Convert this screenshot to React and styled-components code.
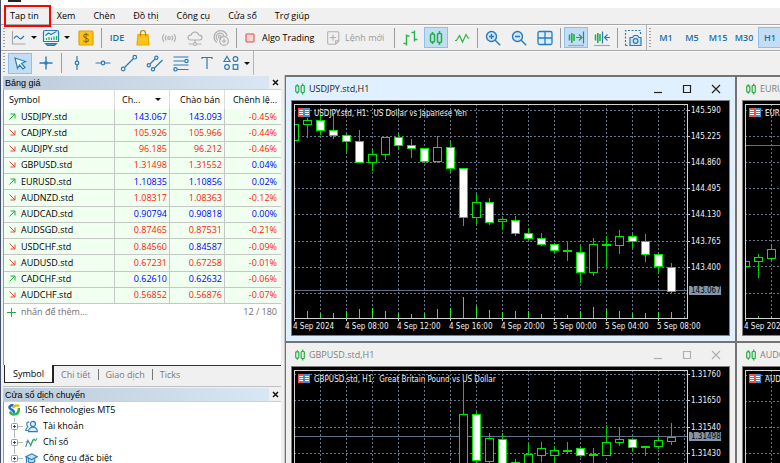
import React, { useState } from 'react';
import styled, { createGlobalStyle, css } from 'styled-components';

const GlobalStyle = createGlobalStyle`
  * {
    box-sizing: border-box;
  }
  body {
    margin: 0;
    background: #f0f0f0;
    color: #000;
    font-family: 'Open Sans', 'Noto Sans', sans-serif;
    font-size: 9px;
    line-height: 16px;
  }
  button {
    font: inherit;
    color: inherit;
    border: 0;
    padding: 0;
    background: none;
  }
`;

const Page = styled.div`
  display: flex;
  flex-direction: column;
  height: 100vh;
  overflow: hidden;
  border-left: 1px solid #43506a;
`;

const TitleBar = styled.header`
  flex: none;
  height: 8px;
  padding-left: 7px;
  background: #fff;
`;

const AppMark = styled.div`
  width: 13px;
  height: 2px;
  background: #222;
`;

const MenuBar = styled.nav`
  display: flex;
  flex: none;
  height: 16px;
`;

const MenuItem = styled.button`
  position: relative;
  padding: 0 9px;
  white-space: nowrap;

  ${props => props.$marked && css`
    &::after {
      content: '';
      position: absolute;
      inset: -3px -3px -3px 3px;
      border: 2px solid #f00;
      z-index: 2;
    }
  `}
`;

const Toolbar = styled.div`
  display: flex;
  flex: none;
  align-items: center;
  height: ${props => props.$height}px;
  padding-left: 2px;
  border-top: 1px solid #a8a8a8;
  box-shadow: inset 0 1px #fafafa;
`;

const Grip = styled.span`
  flex: none;
  width: 2px;
  height: 20px;
  margin-right: 2px;
  background: repeating-linear-gradient(#a0a0a0 0 1px, transparent 1px 3px);
`;

const Separator = styled.span`
  flex: none;
  width: 1px;
  height: 20px;
  margin: 0 2px;
  background: #9c9c9c;
`;

const GroupEdge = styled.span`
  flex: none;
  width: 1px;
  height: 100%;
  margin-right: 2px;
  background: #b4b4b4;
`;

const ToolButton = styled.button`
  display: flex;
  flex: none;
  align-items: center;
  justify-content: center;
  width: 24px;
  height: 21px;
  margin: 0 1px;
  border: 1px solid ${props => (props.$active ? '#8fc0ea' : 'transparent')};
  background: ${props => (props.$active ? '#c3ddf5' : 'none')};
  color: #1c6ea8;
`;

const TextButton = styled(ToolButton)`
  font-weight: 600;
`;

const DropButton = styled.button`
  display: flex;
  flex: none;
  align-items: center;
  gap: 4px;
  width: 33px;
  padding-left: 2px;
`;

const LabelButton = styled.button`
  display: flex;
  flex: none;
  align-items: center;
  gap: 4px;
  width: ${props => props.$width}px;
  padding-left: 3px;
  white-space: nowrap;
  color: ${props => (props.disabled ? '#9a9a9a' : '#000')};
`;

const Caret = styled.span`
  flex: none;
  border: 3px solid transparent;
  border-top-color: #111;
  border-bottom: 0;
`;

const Main = styled.main`
  display: flex;
  flex: 1;
  min-height: 0;
`;

const Sidebar = styled.aside`
  display: flex;
  flex-direction: column;
  flex: none;
  width: 284px;
  padding: 1px 3px 0 2px;
  border-right: 1px solid #c8c8c8;
`;

const PanelTitle = styled.h2`
  display: flex;
  flex: none;
  align-items: center;
  justify-content: space-between;
  height: 13px;
  margin: 0;
  padding-left: 2px;
  background: linear-gradient(90deg, #bccbda, #d9e6f3 266px, #f0f0f0 266px);
  font-family: 'Liberation Sans', sans-serif;
  font-size: 9px;
  font-weight: 400;
  line-height: 12px;
`;

const PanelClose = styled.button`
  display: flex;
  padding: 0 2px;
`;

const PanelBody = styled.div`
  flex: ${props => (props.$fill ? '1' : 'none')};
  height: ${props => (props.$fill ? 'auto' : '276px')};
  background: #fff;
  border-left: 1px solid #9a9a9a;
  border-top: 1px solid #d0d0d0;
`;

const Quotes = styled.table`
  width: 100%;
  height: 214px;
  border-collapse: separate;
  border-spacing: 0;
  table-layout: fixed;
`;

const HeadCell = styled.th`
  height: 19px;
  padding: 0 4px 0 ${props => (props.$first ? 5 : 7)}px;
  border-right: 1px solid #ddd;
  font-weight: 400;
  line-height: 18px;
  text-align: ${props => props.$align || 'left'};
  white-space: nowrap;

  &:last-child {
    border-right: 0;
  }
`;

const SortMark = styled(Caret)`
  display: inline-block;
  margin: 0 0 2px 15px;
`;

const Cell = styled.td`
  padding: 0 2px 0 0;
  background: #f0fff0;
  border-right: 1px solid #c4c8c4;
  border-bottom: 1px solid #c4c8c4;
  color: ${props => (props.$up ? '#00f' : '#ff1a0a')};
  line-height: 14px;
  text-align: right;

  &:last-child {
    padding-right: 4px;
    border-right: 0;
  }
`;

const NameCell = styled(Cell)`
  padding-left: 5px;
  color: #000;
  text-align: left;

  svg {
    margin-right: 5px;
  }
`;

const AddRow = styled.div`
  display: flex;
  align-items: center;
  padding: 0 4px 0 3px;
  gap: 5px;
  color: #707070;
`;

const Count = styled.span`
  margin-left: auto;
`;

const Tabs = styled.div`
  display: flex;
  flex: none;
  height: 22px;
  margin-bottom: 1px;
  padding-left: 1px;
  border-bottom: 1px solid #c0c0c0;
`;

const Tab = styled.button`
  height: 18px;
  padding: 0 7px;
  color: #7a7a7a;
  line-height: 16px;
  border-top: 1px solid #333;

  ${props => props.$active && css`
    padding: 0 8px;
    background: #fff;
    color: #000;
    border: solid #222;
    border-width: 0 2px 1px 1px;
  `}
`;

const TabDivider = styled.span`
  height: 18px;
  padding-top: 3px;
  border-top: 1px solid #333;

  &::before {
    content: '';
    display: block;
    width: 1px;
    height: 11px;
    background: #777;
  }
`;

const TabRest = styled.span`
  flex: 1;
  border-top: 1px solid #333;
`;

const Tree = styled.ul`
  margin: 0;
  padding: 0 0 0 4px;
  list-style: none;
`;

const TreeItem = styled.li`
  display: flex;
  align-items: center;
  gap: 5px;
  height: 16px;
  padding-left: ${props => (props.$child ? 2 : 0)}px;
`;

const Workspace = styled.section`
  display: grid;
  flex: 1;
  grid-template-columns: 449px 449px;
  grid-template-rows: 264px 264px;
  gap: 2px;
  min-width: 0;
  overflow: hidden;
  background: #737373;
  border-left: 1px solid #737373;
  border-top: 2px solid #737373;
`;

const ChartWindow = styled.article`
  padding: 0 5px;
  background: ${props => (props.$active ? '#e1f0fe' : '#f0f0f0')};
  color: ${props => (props.$active ? '#222' : '#808080')};
`;

const WindowTitle = styled.header`
  display: flex;
  align-items: center;
  height: 23px;
  padding: 0 9px 0 2px;
  gap: 2px;
`;

const WindowName = styled.h3`
  flex: 1;
  margin: 0;
  font-size: 9px;
  font-weight: 400;
  line-height: 20px;
`;

const WindowButton = styled.button`
  display: flex;
  margin-left: 17px;
`;

const ChartFrame = styled.div`
  border: 1px solid #808080;
  background: #000;
`;

const ChartSvg = styled.svg`
  display: block;
  font-family: 'DejaVu Sans Condensed', 'Open Sans', sans-serif;
  font-size: 8px;
  fill: #f0f0f0;
`;

function Icon({ size = 18, children, color = '#2a7cb8', width = 1.2 }) {
  return (
    <svg
      width={size}
      height={size}
      viewBox="0 0 18 18"
      fill="none"
      stroke={color}
      strokeWidth={width}
      aria-hidden="true"
    >
      {children}
    </svg>
  );
}

const LineChartIcon = () => (
  <Icon>
    <path d="M3.5 2v13H16.500" stroke="#a8a8a8" />
    <path d="M5 9.500c2-3 3-3 4.500-1s2.500 2 5.500-1.500" />
  </Icon>
);

const MonitorIcon = () => (
  <Icon>
    <path d="M1.500 3q0-1.500 1.500-1.500h12q1.500 0 1.500 1.500v9.500h-15z" fill="#e6f3fc" />
    <path d="M3.500 14.500h11l-2 2h-7z" fill="#4b9bd3" />
    <path d="M3.500 6.500l3-2.500 2.500 1.500 5.500-3" />
    <path d="M4.500 11V9M7 11V8M9.500 11V8.500M12 11V7.500M14.500 11V7" stroke="#23b14d" />
  </Icon>
);

const DollarIcon = () => (
  <Icon color="#dba400">
    <rect x="2" y="2" width="14" height="14" rx="1" fill="#fcc419" />
    <path d="M11.500 6.500Q11 5.200 9 5.200T6.700 7Q6.700 8.500 9 9t2.400 2Q11.400 12.800 9 12.800T6.500 11.500M9 3.800v10.400" stroke="#9a7000" />
  </Icon>
);

const BagIcon = () => (
  <Icon color="#e5a900">
    <path d="M6.500 6V4q0-2.500 2.500-2.500T11.500 4v2" stroke="#b98600" />
    <path d="M4 5.500h10l1 10.500h-12z" fill="#fcc419" />
    <path d="M6.500 7.500V5M11.500 7.500V5" stroke="#b98600" />
  </Icon>
);

const SignalIcon = () => (
  <Icon color="#b0b0b0">
    <circle cx="9" cy="9" r="1.300" />
    <path d="M6.300 6.500q-2 2.500 0 5M11.700 6.500q2 2.500 0 5M4 5q-3 4 0 8M14 5q3 4 0 8" />
  </Icon>
);

const CloudIcon = () => (
  <Icon color="#b0b0b0">
    <path d="M5 11Q2 11 2 8.500T5 6.200Q6 3 9 3t4 3.200q3 0 3 2.300T13.500 11zM9 11v3M2.500 15H7M11 15h4.500" />
    <circle cx="9" cy="15" r="1.500" />
  </Icon>
);

const PodcastIcon = () => (
  <Icon color="#b0b0b0">
    <path d="M5 13.500A6.500 6.500 0 1 1 15 7M6 11.500A4 4 0 1 1 12 7M8 9a1.300 1.300 0 1 1 1-1M8.500 8v3" />
    <circle cx="12" cy="12" r="4.300" />
    <path d="M12 9.800v4.400M9.800 12h4.400" />
  </Icon>
);

const StopIcon = () => (
  <Icon size={16} color="#d9534f">
    <rect x="4.500" y="4.500" width="9" height="9" rx="1" fill="#fbd5d3" />
  </Icon>
);

const NewOrderIcon = () => (
  <Icon size={16} color="#b0b0b0">
    <path d="M4 2h10.500q1 0 1 1v9.500L12 16H4q-1 0-1-1V3q0-1 1-1zM15 12h-3v4M9 5v7M5.500 8.500h7" />
  </Icon>
);

const BarsIcon = () => (
  <Icon color="#2bb54a" width={1.400}>
    <path d="M5.500 5.500v11M2.500 14.500h3M5.500 7h3M13.500 1.500v11M10.500 3.500h3M13.500 10.500h3" />
  </Icon>
);

const CandlesIcon = ({ size }) => (
  <Icon color="#1fae3f" size={size} width={1.500}>
    <rect x="3.500" y="5" width="4" height="8" rx="1" />
    <rect x="10.500" y="4.500" width="4" height="9" rx="1" />
    <path d="M5.500 3V5M5.500 13v2M12.500 2v2.500M12.500 13.500v2.500" />
  </Icon>
);

const ZigzagIcon = () => (
  <Icon color="#2bb54a">
    <path d="M2 11.500h1.500l3-5 3 6.500 3.500-7.500 2 3.500h1.500" />
  </Icon>
);

const ZoomIcon = ({ plus }) => (
  <Icon width={1.400}>
    <circle cx="7.500" cy="7.500" r="5" fill="#cbe6fa" />
    <path d={plus ? 'M5 7.500h5M7.500 5v5M11.200 11.200l5 5' : 'M5 7.500h5M11.200 11.200l5 5'} />
  </Icon>
);

const TileIcon = () => (
  <Icon width={1.300}>
    <rect x="2" y="2.500" width="14" height="13" rx="1.500" fill="#dceefb" />
    <path d="M9 2.500v13M2 9h14" />
  </Icon>
);

const ScrollIcon = ({ back }) => (
  <Icon>
    <path d="M1 16.500h16" stroke="#a6a6a6" />
    <path d="M2.500 5.500v6M4.800 4v10M7 5v7" stroke="#23b14d" strokeWidth="1.600" />
    {back
      ? <path d="M9.500 2.500v12M17 8.500h-5M14.500 5.500l-3 3 3 3" />
      : (
        <>
          <path d="M9 8.500h5M12 5.500l3 3-3 3" stroke="#23a04d" />
          <path d="M16.500 2.500v12" />
        </>
      )}
  </Icon>
);

const CameraIcon = () => (
  <Icon>
    <path d="M1.500 16.500V1.500h15V6" strokeDasharray="2 1.500" />
    <path d="M1.500 16.500H5" strokeDasharray="2 1.500" />
    <path d="M6 8.500h2.500L10 6.500h3.500L15 8.500h2V16.500H6z" fill="#cbe6fa" />
    <circle cx="11.600" cy="12" r="2.300" />
  </Icon>
);

const CursorIcon = () => (
  <Icon>
    <path d="M4 4l10.500 3.500-4 2 3.500 4-2 1.500-3.500-4-2 3.500z" fill="#f4faff" />
  </Icon>
);

const CrossIcon = () => (
  <Icon width={1.400}>
    <path d="M9 2.500v13M2.500 9h13" />
    <path d="M7.500 9h3" strokeWidth="3" />
  </Icon>
);

const VLineIcon = () => (
  <Icon>
    <path d="M9 2v5M9 11v5" />
    <circle cx="9" cy="9" r="1.800" fill="#cfe7fa" />
  </Icon>
);

const HLineIcon = () => (
  <Icon>
    <path d="M1.500 9H7M11 9h5.500" />
    <circle cx="9" cy="9" r="1.800" fill="#cfe7fa" />
  </Icon>
);

const TrendIcon = () => (
  <Icon>
    <path d="M4.500 13.500l9-9" />
    <circle cx="3.200" cy="15" r="1.800" />
    <circle cx="14.800" cy="3.200" r="1.800" />
  </Icon>
);

const ChannelIcon = () => (
  <Icon>
    <path d="M4 10l5-5M8 14.500L16.500 6" />
    <circle cx="2.800" cy="11.300" r="1.600" />
    <circle cx="10.300" cy="3.800" r="1.600" />
    <circle cx="7" cy="15.300" r="1.600" />
  </Icon>
);

const FiboIcon = () => (
  <Icon>
    <path d="M1.500 3h15M1.500 7h11M1.500 11h15M5.500 15.500h11" />
    <circle cx="14.500" cy="7" r="1.700" />
    <circle cx="3.500" cy="15.300" r="1.700" />
  </Icon>
);

const TextIcon = () => (
  <Icon>
    <path d="M4 5V3.500h10V5M9 3.500V15" />
  </Icon>
);

const ShapesIcon = () => (
  <Icon>
    <path d="M5 2.500l3 5H2z" />
    <circle cx="13.500" cy="5" r="2.300" />
    <circle cx="5" cy="13" r="2.300" />
    <rect x="11.200" y="10.700" width="4.600" height="4.600" />
  </Icon>
);

const Trend = ({ up }) => (
  <svg width="7" height="7" viewBox="0 0 7 7" fill="none" stroke={up ? '#1fae3f' : '#e04a3f'} role="img" aria-label={up ? 'up' : 'down'}>
    <path d={up ? 'M.5 6.500l5.500-5.500M1.500 1h4.500v4.500' : 'M.5.5l5.500 5.500M1.500 6h4.500V1.500'} />
  </svg>
);

const CloseCross = () => (
  <svg width="7" height="7" viewBox="0 0 7 7" stroke="#111" strokeWidth="1.500">
    <path d="M1 1l5 5M6 1L1 6" />
  </svg>
);

const PlusIcon = () => (
  <svg width="9" height="9" viewBox="0 0 9 9" stroke="#1fae3f">
    <path d="M4.500 0v9M0 4.500h9" />
  </svg>
);

const Expander = () => (
  <svg width="10" height="16" viewBox="0 0 10 16" overflow="visible" fill="none" stroke="#9a9a9a">
    <path d="M4.500 0v4M4.500 12v4M8 8.500h5" stroke="#b8b8b8" />
    <rect x="1.500" y="5.500" width="6" height="6" rx="1" fill="#fff" />
    <path d="M3 8.500h3M4.500 7v3" stroke="#29487d" />
  </svg>
);

const LogoIcon = () => (
  <svg width="12" height="12" viewBox="0 0 12 12" fill="none" strokeWidth="2.400">
    <path d="M5.500 1.500C2.500.5.500 3 2 4.500S6.500 6 6 9" stroke="#1670d0" />
    <path d="M5 4C6 1 9.500.8 11 2.500" stroke="#f7b500" />
    <path d="M11 4c0 4-2 6.500-5 6.500" stroke="#2bb54a" />
    <path d="M2 7.500q1 3 4 3" stroke="#2bb54a" />
  </svg>
);

const AccountsIcon = () => (
  <Icon size={13} width={1.600}>
    <circle cx="11" cy="5.500" r="3.500" fill="#d9ecfa" />
    <path d="M5 16q0-6 6-6t6 6z" fill="#d9ecfa" />
    <path d="M6 2.500Q2 2.500 2.500 6t2 3.500Q1 11 1 14.500h3" />
  </Icon>
);

const IndicatorIcon = () => (
  <Icon size={13} width={1.400}>
    <path d="M1 15l3-9 4 7 3-8" stroke="#2277b5" />
    <path d="M7 14.500l4-8q2-4 2.500-1t3-2.500M1 8h4" stroke="#2bb54a" />
  </Icon>
);

const CapIcon = () => (
  <Icon size={13} width={1.600}>
    <path d="M1 6.500l8.500-4 7.500 4-8 4zM4.500 8.500v5q4.500 3 9 0v-5M2 7v8" fill="#bfe0f8" />
  </Icon>
);

const menu = ['Tap tin', 'Xem', 'Chèn', 'Đồ thị', 'Công cụ', 'Cửa sổ', 'Trợ giúp'];

const timeframes = ['M1', 'M5', 'M15', 'M30', 'H1'];

// name, last tick up, bid, bid up, ask, ask up, daily change
const quotes = [
  ['USDJPY.std', true, '143.067', true, '143.093', true, '-0.45%'],
  ['CADJPY.std', false, '105.926', false, '105.966', false, '-0.44%'],
  ['AUDJPY.std', false, '96.185', false, '96.212', false, '-0.46%'],
  ['GBPUSD.std', false, '1.31498', false, '1.31552', false, '0.04%'],
  ['EURUSD.std', true, '1.10835', true, '1.10856', true, '0.02%'],
  ['AUDNZD.std', false, '1.08317', false, '1.08363', false, '-0.12%'],
  ['AUDCAD.std', true, '0.90794', true, '0.90818', true, '0.00%'],
  ['AUDSGD.std', false, '0.87465', false, '0.87531', false, '-0.21%'],
  ['USDCHF.std', false, '0.84560', false, '0.84587', true, '-0.09%'],
  ['AUDUSD.std', false, '0.67231', false, '0.67258', false, '-0.01%'],
  ['CADCHF.std', true, '0.62610', true, '0.62632', true, '-0.06%'],
  ['AUDCHF.std', false, '0.56852', false, '0.56876', false, '-0.07%'],
];

const times = ['4 Sep 2024', '4 Sep 08:00', '4 Sep 12:00', '4 Sep 16:00', '4 Sep 20:00', '5 Sep 00:00', '5 Sep 04:00', '5 Sep 08:00'];

// candles: slot, high, body top, body bottom, low, bearish
const charts = [
  {
    symbol: 'USDJPY.std',
    about: 'US Dollar vs Japanese Yen',
    grid: [6, 32, 58, 84, 110, 137, 163, 189],
    prices: ['145.590', '145.225', '144.860', '144.495', '144.130', '143.765', '143.400'],
    bid: 186,
    price: '143.067',
    candles: [
      [0, 20, 20, 36, 36, 0], [1, 14, 16, 20, 33, 0], [2, 9, 16, 26, 30, 1], [3, 10, 26, 31, 34, 1],
      [4, 29, 31, 37, 47, 1], [5, 26, 37, 58, 58, 1], [6, 45, 50, 58, 66, 0], [7, 33, 33, 50, 55, 0],
      [8, 29, 33, 41, 45, 1], [9, 35, 41, 44, 53, 1], [10, 44, 44, 57, 58, 1], [11, 32, 43, 57, 58, 0],
      [12, 38, 43, 64, 67, 1], [13, 64, 64, 113, 121, 1], [14, 90, 98, 113, 119, 0], [15, 94, 98, 118, 120, 1],
      [16, 114, 115, 117, 124, 0], [17, 112, 116, 129, 131, 1], [18, 124, 129, 134, 135, 1], [19, 129, 134, 140, 141, 1],
      [20, 139, 140, 146, 149, 1], [21, 138, 146, 147, 156, 1], [22, 141, 148, 168, 178, 1], [23, 134, 140, 168, 171, 0],
      [24, 132, 140, 140, 162, 0], [25, 126, 132, 141, 149, 0], [26, 129, 132, 137, 143, 1], [27, 130, 137, 150, 157, 1],
      [28, 149, 150, 162, 169, 1], [29, 159, 163, 187, 188, 1],
    ],
    volumes: [0, 7, 5, 5, 7, 9, 10, 7, 5, 4, 5, 9, 10, 21, 12, 8, 6, 7, 7, 4, 0, 3, 7, 11, 9, 7, 5, 5, 6, 6],
  },
  {
    symbol: 'EURUSD.std',
    about: 'Euro vs US Dollar',
    grid: [6, 32, 58, 84, 110, 136, 162, 189],
    prices: [],
    bid: 41,
    price: '1.10835',
    candles: [[0, 157, 157, 162, 162, 0], [1, 150, 153, 157, 173, 0], [2, 140, 145, 154, 157, 0], [3, 140, 147, 147, 155, 0]],
    volumes: [0, 2, 2, 4],
  },
  {
    symbol: 'GBPUSD.std',
    about: 'Great Britain Pound vs US Dollar',
    grid: [4, 30, 57, 83, 109, 135, 161, 187],
    prices: ['1.31760', '1.31650', '1.31540', '1.31430', '1.31320', '1.31210', '1.31100', '1.30990'],
    bid: 66,
    price: '1.31498',
    candles: [
      [13, 10, 44, 109, 114, 0], [14, 41, 44, 90, 95, 1], [15, 63, 68, 91, 95, 0], [16, 63, 69, 103, 107, 1],
      [17, 89, 92, 96, 99, 0], [18, 73, 84, 93, 97, 0], [19, 72, 78, 85, 91, 0], [20, 76, 80, 85, 95, 0],
      [21, 72, 80, 80, 83, 0], [22, 77, 78, 85, 86, 1], [23, 78, 84, 84, 92, 0], [24, 55, 72, 85, 85, 0],
      [25, 57, 69, 72, 75, 0], [26, 68, 69, 77, 80, 1], [27, 76, 76, 76, 85, 0], [28, 67, 70, 76, 78, 0],
      [29, 53, 67, 71, 74, 0],
    ],
    volumes: [],
  },
  {
    symbol: 'AUDCAD.std',
    about: 'Australian Dollar vs Canadian Dollar',
    grid: [5, 31, 57, 83, 109, 135, 161, 187],
    prices: [],
    bid: 150,
    price: '0.90794',
    candles: [],
    volumes: [],
  },
];

function Chart({ chart }) {
  const { symbol, about, grid, prices, bid, price, candles, volumes } = chart;
  const columns = Array.from({ length: 15 }, (_, i) => 26 * (i + 1));

  return (
    <ChartSvg width="437" height="234" viewBox="-2 -3 437 234" role="img" aria-label={`${symbol} chart`}>
      <svg x="0" y="0" width="393" height="214" viewBox="0 0 393 214" shapeRendering="crispEdges">
        <g stroke="#66768a" strokeDasharray="2 2">
          {grid.map(y => <path key={y} d={`M0 ${y + 0.5}H393`} />)}
          {columns.map(x => <path key={x} d={`M${x + 0.5} 0V214`} />)}
        </g>
        <path d={`M0 ${bid + 0.5}H393`} stroke="#5f7386" />
        {volumes.map((size, i) => (
          <rect key={i} x={13 * i} y={214 - size} width="1" height={size} fill="#32e632" />
        ))}
        {candles.map(([slot, high, top, bottom, low, bearish]) => (
          <g key={slot} transform={`translate(${13 * slot} 0)`}>
            <rect x="0" y={high} width="1" height={low - high + 1} fill="#00d200" />
            <rect
              x="-3.500"
              y={top + 0.5}
              width="8"
              height={Math.max(bottom - top, 1)}
              fill={bearish ? '#fff' : '#000'}
              stroke="#00e600"
            />
          </g>
        ))}
      </svg>
      <path d="M.5 214V.5H393.500V214.500H0" fill="none" stroke="#d4d4d4" shapeRendering="crispEdges" />
      <rect x="4" y="4" width="6" height="9" fill="#e5534b" />
      <rect x="10" y="4" width="6" height="9" fill="#3a8fd9" />
      <path d="M5 6.500h4M5 8.500h4M5 10.500h4M11 6.500h4M11 8.500h4M11 10.500h4" stroke="#fff" shapeRendering="crispEdges" />
      <text x="20" y="12" xmlSpace="preserve">{`${symbol}, H1:  ${about}`}</text>
      {prices.map((label, i) => (
        <g key={label}>
          <path d={`M393 ${grid[i] + 0.5}h3`} stroke="#c8c8c8" />
          <text x="397" y={grid[i] + 3}>{label}</text>
        </g>
      ))}
      <rect x="395" y={bid - 4} width="32" height="9" fill="#8496aa" />
      <text x="397" y={bid + 3} fill="#000">{price}</text>
      {times.map((label, i) => (
        <g key={label}>
          <path d={`M${52 * i + 0.5} 214v3`} stroke="#c8c8c8" />
          <text x={52 * i - 1} y="225">{label}</text>
        </g>
      ))}
    </ChartSvg>
  );
}

function ChartPane({ chart, active }) {
  return (
    <ChartWindow $active={active}>
      <WindowTitle>
        <CandlesIcon size={14} />
        <WindowName>{chart.symbol},H1</WindowName>
        {['M1 8.500h8', 'M1.500 1.500h7v7h-7z', 'M1 1l8 8M9 1L1 9'].map((d, i) => (
          <WindowButton key={d} aria-label={['Minimize', 'Maximize', 'Close'][i]}>
            <svg width="10" height="10" viewBox="0 0 10 10" fill="none" stroke={active ? '#222' : '#b0b0b0'} strokeWidth="1.200">
              <path d={d} />
            </svg>
          </WindowButton>
        ))}
      </WindowTitle>
      <ChartFrame>
        <Chart chart={chart} />
      </ChartFrame>
    </ChartWindow>
  );
}

function MarketWatch() {
  return (
    <>
      <PanelTitle>
        Bảng giá
        <PanelClose aria-label="Close"><CloseCross /></PanelClose>
      </PanelTitle>
      <PanelBody>
        <Quotes>
          <colgroup>
            <col width="111" />
            <col width="55" />
            <col width="55" />
            <col />
          </colgroup>
          <thead>
            <tr>
              <HeadCell $first>Symbol</HeadCell>
              <HeadCell>Ch...<SortMark /></HeadCell>
              <HeadCell $align="right">Chào bán</HeadCell>
              <HeadCell $align="right">Chênh lệ...</HeadCell>
            </tr>
          </thead>
          <tbody>
            {quotes.map(([name, up, bid, bidUp, ask, askUp, change]) => (
              <tr key={name}>
                <NameCell><Trend up={up} />{name}</NameCell>
                <Cell $up={bidUp}>{bid}</Cell>
                <Cell $up={askUp}>{ask}</Cell>
                <Cell $up={!change.startsWith('-')}>{change}</Cell>
              </tr>
            ))}
          </tbody>
        </Quotes>
        <AddRow>
          <PlusIcon />
          nhấn để thêm...
          <Count>12 / 180</Count>
        </AddRow>
      </PanelBody>
      <Tabs>
        <Tab $active>Symbol</Tab>
        <Tab>Chi tiết</Tab>
        <TabDivider />
        <Tab>Giao dịch</Tab>
        <TabDivider />
        <Tab>Ticks</Tab>
        <TabRest />
      </Tabs>
    </>
  );
}

function Navigator() {
  return (
    <>
      <PanelTitle>
        Cửa sổ dịch chuyển
        <PanelClose aria-label="Close"><CloseCross /></PanelClose>
      </PanelTitle>
      <PanelBody $fill>
        <Tree>
          <TreeItem><LogoIcon />IS6 Technologies MT5</TreeItem>
          <TreeItem $child><Expander /><AccountsIcon />Tài khoản</TreeItem>
          <TreeItem $child><Expander /><IndicatorIcon />Chỉ số</TreeItem>
          <TreeItem $child><Expander /><CapIcon />Công cụ đặc biệt</TreeItem>
        </Tree>
      </PanelBody>
    </>
  );
}

function App() {
  const [timeframe, setTimeframe] = useState('H1');

  return (
    <Page>
      <GlobalStyle />
      <TitleBar><AppMark /></TitleBar>
      <MenuBar>
        {menu.map((item, i) => <MenuItem key={item} $marked={i === 0}>{item}</MenuItem>)}
      </MenuBar>

      <Toolbar $height={26}>
        <Grip />
        <DropButton aria-label="Chart type"><LineChartIcon /><Caret /></DropButton>
        <DropButton aria-label="Indicators"><MonitorIcon /><Caret /></DropButton>
        <ToolButton aria-label="Deposit"><DollarIcon /></ToolButton>
        <Separator />
        <TextButton>IDE</TextButton>
        <ToolButton aria-label="Market"><BagIcon /></ToolButton>
        <ToolButton aria-label="Signals"><SignalIcon /></ToolButton>
        <ToolButton aria-label="Hosting"><CloudIcon /></ToolButton>
        <ToolButton aria-label="Broadcast"><PodcastIcon /></ToolButton>
        <Separator />
        <LabelButton $width={83}><StopIcon />Algo Trading</LabelButton>
        <LabelButton $width={70} disabled><NewOrderIcon />Lệnh mới</LabelButton>
        <Separator />
        <ToolButton aria-label="Bars"><BarsIcon /></ToolButton>
        <ToolButton aria-label="Candles" $active><CandlesIcon /></ToolButton>
        <ToolButton aria-label="Line"><ZigzagIcon /></ToolButton>
        <Separator />
        <ToolButton aria-label="Zoom in"><ZoomIcon plus /></ToolButton>
        <ToolButton aria-label="Zoom out"><ZoomIcon /></ToolButton>
        <ToolButton aria-label="Tile windows"><TileIcon /></ToolButton>
        <Separator />
        <ToolButton aria-label="Auto scroll" $active><ScrollIcon /></ToolButton>
        <ToolButton aria-label="Chart shift"><ScrollIcon back /></ToolButton>
        <Separator />
        <ToolButton aria-label="Screenshot"><CameraIcon /></ToolButton>
        <GroupEdge />
        <Grip />
        {timeframes.map(item => (
          <TextButton key={item} $active={item === timeframe} onClick={() => setTimeframe(item)}>
            {item}
          </TextButton>
        ))}
      </Toolbar>

      <Toolbar $height={25}>
        <Grip />
        <ToolButton aria-label="Cursor" $active><CursorIcon /></ToolButton>
        <ToolButton aria-label="Crosshair"><CrossIcon /></ToolButton>
        <Separator />
        <ToolButton aria-label="Vertical line"><VLineIcon /></ToolButton>
        <ToolButton aria-label="Horizontal line"><HLineIcon /></ToolButton>
        <ToolButton aria-label="Trend line"><TrendIcon /></ToolButton>
        <ToolButton aria-label="Channel"><ChannelIcon /></ToolButton>
        <ToolButton aria-label="Fibonacci"><FiboIcon /></ToolButton>
        <ToolButton aria-label="Text"><TextIcon /></ToolButton>
        <DropButton aria-label="Shapes"><ShapesIcon /><Caret /></DropButton>
        <GroupEdge />
      </Toolbar>

      <Main>
        <Sidebar>
          <MarketWatch />
          <Navigator />
        </Sidebar>
        <Workspace>
          {charts.map((chart, i) => <ChartPane key={chart.symbol} chart={chart} active={i === 0} />)}
        </Workspace>
      </Main>
    </Page>
  );
}

export default App;
